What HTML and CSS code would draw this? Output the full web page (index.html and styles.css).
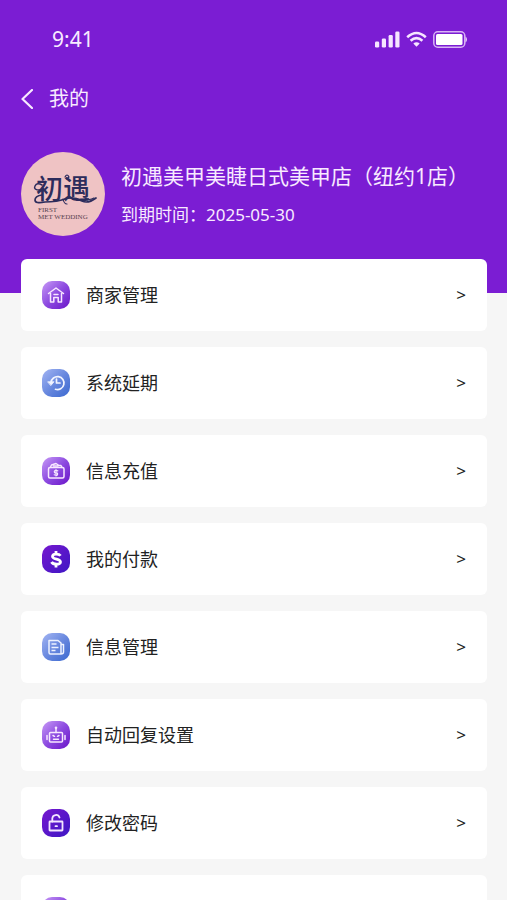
FILE: index.html
```html
<!DOCTYPE html>
<html lang="zh-CN">
<head>
<meta charset="utf-8">
<meta name="viewport" content="width=device-width, initial-scale=1">
<title>我的</title>
<link rel="stylesheet" href="styles.css">
</head>
<body>
<div class="app">
  <svg class="defs" aria-hidden="true">
    <defs>
      <linearGradient id="violet" x1="0" y1="0" x2="1" y2="1"><stop offset="0" stop-color="#c79af6"/><stop offset=".5" stop-color="#8d4be0"/><stop offset="1" stop-color="#6a14c8"/></linearGradient>
      <linearGradient id="blue" x1="0" y1="0" x2="1" y2="1"><stop offset="0" stop-color="#a3b5f3"/><stop offset=".55" stop-color="#6485dd"/><stop offset="1" stop-color="#3b69d0"/></linearGradient>
      <linearGradient id="deep" x1="0" y1="0" x2="1" y2="1"><stop offset="0" stop-color="#7618cf"/><stop offset="1" stop-color="#3e16c4"/></linearGradient>
    </defs>
  </svg>
  <header class="header">
    <div class="status">
      <span class="time">9:41</span>
      <div class="indicators">
        <svg width="25" height="17" viewBox="0 0 25 17" fill="#f6e6ff" aria-hidden="true"><rect x="0" y="10.500" width="4.200" height="6" rx="1.300"/><rect x="6.800" y="7.500" width="4.200" height="9" rx="1.300"/><rect x="13.600" y="4" width="4.200" height="12.500" rx="1.300"/><rect x="20.300" y="0.500" width="4.200" height="16" rx="1.300"/></svg>
        <svg width="21" height="17" viewBox="0 0 21 17" fill="none" stroke="#f6e6ff" stroke-width="2.600" aria-hidden="true"><path d="M1.200 6.200Q10.500-2.200 19.800 6.200M4.600 9.800Q10.500 4.500 16.400 9.800"/><path d="M10.500 15.800 7.300 12.600Q10.500 9.800 13.700 12.600Z" fill="#f6e6ff" stroke="none"/></svg>
        <svg width="34" height="17" viewBox="0 0 34 17" aria-hidden="true"><rect x=".8" y=".8" width="31" height="15.400" rx="4" fill="none" stroke="#d9b3f5" stroke-width="1.500"/><rect x="3" y="3" width="26.500" height="11" rx="1.500" fill="#fff"/><path d="M32.500 5.500Q34 6.500 34 8.500T32.500 11.500Z" fill="#e8cffa"/></svg>
      </div>
    </div>
    <div class="navbar">
      <button class="back" type="button" aria-label="返回"><svg width="12" height="20" viewBox="0 0 12 20" fill="none" stroke="#f8eaff" stroke-width="2.200" stroke-linecap="round" stroke-linejoin="round"><path d="M11 1 1.500 10 11 19"/></svg></button>
      <h1 class="title">我的</h1>
    </div>
    <div class="profile">
      <svg class="avatar" viewBox="0 0 84 84" aria-hidden="true">
        <circle cx="42" cy="42" r="42" fill="#efc3c4"/>
        <text class="logo-cn" x="15" y="47">初遇</text>
        <g fill="none" stroke="#2d2c5c" stroke-linecap="round">
          <path stroke-width="1.500" d="M21 33Q16 30 14 34T19 38"/>
          <path stroke-width="1.700" d="M21 43Q14 44 14 48T24 50Q36 50 44 47T61 49Q67 52 75 46"/>
          <path stroke-width="1.200" d="M44 25Q46 21 48 25M48 25 46 27M42 47Q43 52 46 52M64 46Q68 49 73 46"/>
        </g>
        <text class="logo-en" x="17" y="60">FIRST</text>
        <text class="logo-en" x="17" y="67">MET WEDDING</text>
      </svg>
      <div class="shop">
        <h2 class="shop-name">初遇美甲美睫日式美甲店（纽约1店）</h2>
        <p class="expiry">到期时间：<time datetime="2025-05-30">2025-05-30</time></p>
      </div>
    </div>
  </header>
  <nav class="menu">
    <a class="card" href="#merchant">
      <svg class="icon" viewBox="0 0 28 28" fill="none" stroke="#f8e8ff" stroke-width="1.500" stroke-linejoin="round" stroke-linecap="round" aria-hidden="true"><rect width="28" height="28" rx="10" fill="url(#violet)" stroke="none"/><path d="M6.500 12.500 14 7l7.500 5.500M8.500 12.500V21h3.300v-4.500h4.400V21h3.300v-8.500M12 13.500h4"/></svg>
      <span class="label">商家管理</span><span class="arrow" aria-hidden="true">&gt;</span>
    </a>
    <a class="card" href="#renew">
      <svg class="icon" viewBox="0 0 28 28" fill="none" stroke="#f2f5ff" stroke-width="1.700" stroke-linejoin="round" stroke-linecap="round" aria-hidden="true"><rect width="28" height="28" rx="10" fill="url(#blue)" stroke="none"/><path d="M9 13.500a6.500 6.500 0 1 1 4.500 6.800M14.500 10v4h3.500"/><path d="M6 12.800h6l-3 3.500Z" fill="#f2f5ff" stroke-width=".8"/></svg>
      <span class="label">系统延期</span><span class="arrow" aria-hidden="true">&gt;</span>
    </a>
    <a class="card" href="#topup">
      <svg class="icon" viewBox="0 0 28 28" fill="none" stroke="#f8e8ff" stroke-width="1.500" stroke-linejoin="round" stroke-linecap="round" aria-hidden="true"><rect width="28" height="28" rx="10" fill="url(#violet)" stroke="none"/><rect x="6.500" y="10.500" width="15.500" height="10.500" rx="1.500"/><path d="M8.500 10 9.500 8 14 6.500 17 8.500H19l1 2M11.500 9H16"/><path stroke-width="1.200" d="M15.800 13.800Q12.300 12.800 12.300 14.500T14 15.800 15.600 17.300 12.200 17.800M14 12.500v6.500"/></svg>
      <span class="label">信息充值</span><span class="arrow" aria-hidden="true">&gt;</span>
    </a>
    <a class="card" href="#payments">
      <svg class="icon" viewBox="0 0 28 28" fill="none" stroke="#fff" stroke-width="2.800" aria-hidden="true"><rect width="28" height="28" rx="10" fill="url(#deep)" stroke="none"/><path d="M18.500 10.800C17 8.500 10.500 8.200 10.500 11.400S18.500 13.800 18.500 17 11 19.700 9.500 17M14 6v3M14 19v3.500"/></svg>
      <span class="label">我的付款</span><span class="arrow" aria-hidden="true">&gt;</span>
    </a>
    <a class="card" href="#messages">
      <svg class="icon" viewBox="0 0 28 28" fill="none" stroke="#edf2ff" stroke-width="1.500" stroke-linejoin="round" aria-hidden="true"><rect width="28" height="28" rx="10" fill="url(#blue)" stroke="none"/><path d="M7 7.500h9l3 2.500V21H8.500Q7 21 7 19.500ZM19 11.500h2.500V19q0 2-2.500 2M9.500 11h5M9.500 14.500h7M9.500 17.500h4"/></svg>
      <span class="label">信息管理</span><span class="arrow" aria-hidden="true">&gt;</span>
    </a>
    <a class="card" href="#autoreply">
      <svg class="icon" viewBox="0 0 28 28" fill="none" stroke="#f8e8ff" stroke-width="1.500" stroke-linejoin="round" stroke-linecap="round" aria-hidden="true"><rect width="28" height="28" rx="10" fill="url(#violet)" stroke="none"/><rect x="7.500" y="11.500" width="13" height="9.500" rx="1"/><path d="M14 7.500v4M5 14.500v4M23 14.500v4M11 14.500l1.500.8M17 14.500l-1.500.8M11.500 18.200h5"/><circle cx="14" cy="6.800" r="1.300" fill="#f8e8ff" stroke="none"/></svg>
      <span class="label">自动回复设置</span><span class="arrow" aria-hidden="true">&gt;</span>
    </a>
    <a class="card" href="#password">
      <svg class="icon" viewBox="0 0 28 28" fill="none" stroke="#f4e6ff" stroke-width="1.800" stroke-linejoin="round" stroke-linecap="round" aria-hidden="true"><rect width="28" height="28" rx="10" fill="url(#deep)" stroke="none"/><rect x="7.500" y="12.500" width="13" height="9" rx=".5"/><path d="M10.300 12.500V9.500a3.700 3.700 0 0 1 7.200-1M13.500 17.200h1.500"/></svg>
      <span class="label">修改密码</span><span class="arrow" aria-hidden="true">&gt;</span>
    </a>
    <div class="card">
      <svg class="icon" viewBox="0 0 28 28" aria-hidden="true"><rect width="28" height="28" rx="10" fill="url(#violet)"/></svg>
    </div>
  </nav>
</div>
</body>
</html>
```
FILE: styles.css
```css
* {
  box-sizing: border-box;
}

body {
  margin: 0;
  background: #f6f6f6;
  font-family: "Noto Sans", "Noto Sans CJK SC", sans-serif;
}

.app {
  height: 100vh;
  overflow: hidden;
}

.defs {
  position: absolute;
  width: 0;
  height: 0;
}

.header {
  padding: 24px 20px 57px 21px;
  background: #7b1dd3;
  color: #f8eaff;
}

.status {
  display: flex;
  align-items: center;
  justify-content: space-between;
  height: 30px;
  padding: 0 20px 0 31px;
}

.time {
  font-size: 21px;
  line-height: 30px;
}

.indicators {
  display: flex;
  align-items: center;
  gap: 6px;
}

.indicators svg,
.back svg {
  display: block;
}

.navbar {
  display: flex;
  align-items: center;
  gap: 16px;
  height: 30px;
  margin-top: 30px;
}

.back {
  padding: 0;
  border: 0;
  background: none;
}

.title {
  margin: 0;
  font-size: 20px;
  font-weight: 400;
  line-height: 30px;
}

.profile {
  display: flex;
  align-items: center;
  gap: 16px;
  margin-top: 38px;
}

.avatar {
  flex: none;
  width: 84px;
  height: 84px;
}

.logo-cn {
  fill: #2d2c5c;
  font-family: "Noto Sans CJK SC", sans-serif;
  font-size: 27px;
  font-weight: 500;
}

.logo-en {
  fill: #57424f;
  font-family: "Liberation Serif", serif;
  font-size: 7px;
}

.shop-name {
  margin: 0;
  font-size: 21px;
  font-weight: 400;
  line-height: 30px;
  white-space: nowrap;
}

.expiry {
  margin: 12px 0 0;
  font-size: 17px;
  line-height: 24px;
}

.menu {
  display: flex;
  flex-direction: column;
  gap: 16px;
  margin-top: -34px;
  padding: 0 20px 0 21px;
}

.card {
  display: flex;
  flex: none;
  align-items: center;
  gap: 16px;
  height: 72px;
  padding: 0 21px;
  border-radius: 6px;
  background: #fff;
  color: #222;
  text-decoration: none;
}

.icon {
  flex: none;
  width: 28px;
  height: 28px;
}

.label {
  flex: 1;
  font-size: 18px;
  line-height: 28px;
}

.arrow {
  font-size: 17px;
  line-height: 28px;
}
```
